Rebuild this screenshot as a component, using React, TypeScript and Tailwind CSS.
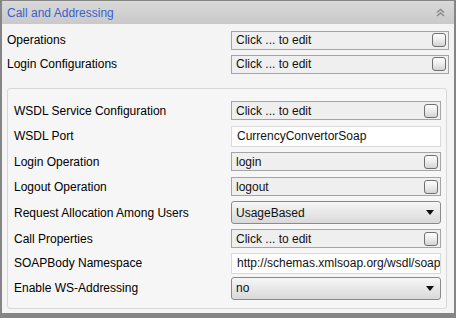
import React from "react";

const font = { fontFamily: '"Liberation Sans", Arial, sans-serif' };

function EditButton() {
  return (
    <span className="h-[14px] w-[14px] shrink-0 rounded-[3px] border border-[#6f6f6f] bg-linear-to-b from-[#fdfdfd] via-[#ececec] to-[#d4d4d4]" />
  );
}

function ClickBox({ text }: { text: string }) {
  return (
    <div className="flex h-[19px] w-full items-center justify-between border border-[#a4a4a4] bg-[#efefef] pl-[4px] pr-[2px] text-[#111]">
      <span className="leading-none">{text}</span>
      <EditButton />
    </div>
  );
}

function TextBox({ text }: { text: string }) {
  return (
    <input
      readOnly
      value={text}
      className="block h-[21px] w-full border border-[#dadada] bg-white pl-[5px] text-[12px] text-[#111] outline-none"
      style={font}
    />
  );
}

function SelectBox({ text }: { text: string }) {
  return (
    <div className="flex h-[23px] w-full items-center justify-between rounded-[3px] border border-[#8a8a8a] bg-linear-to-b from-[#f7f7f7] to-[#d9d9d9] pl-[4px] pr-[6px] text-[#111]">
      <span>{text}</span>
      <svg width="8" height="5" viewBox="0 0 8 5">
        <path d="M0 0 H8 L4 5 Z" fill="#111" />
      </svg>
    </div>
  );
}

type Row = {
  label: string;
  kind: "click" | "text" | "select";
  value: string;
  h: string;
};

const innerRows: Row[] = [
  { label: "WSDL Service Configuration", kind: "click", value: "Click ... to edit", h: "h-[25px]" },
  { label: "WSDL Port", kind: "text", value: "CurrencyConvertorSoap", h: "h-[26px]" },
  { label: "Login Operation", kind: "click", value: "login", h: "h-[25px]" },
  { label: "Logout Operation", kind: "click", value: "logout", h: "h-[25px]" },
  { label: "Request Allocation Among Users", kind: "select", value: "UsageBased", h: "h-[27px]" },
  { label: "Call Properties", kind: "click", value: "Click ... to edit", h: "h-[25px]" },
  { label: "SOAPBody Namespace", kind: "text", value: "http://schemas.xmlsoap.org/wsdl/soap/", h: "h-[24px]" },
  { label: "Enable WS-Addressing", kind: "select", value: "no", h: "h-[26px]" },
];

function Control({ row }: { row: Row }) {
  if (row.kind === "text") return <TextBox text={row.value} />;
  if (row.kind === "select") return <SelectBox text={row.value} />;
  return <ClickBox text={row.value} />;
}

export default function App() {
  return (
    <div
      className="h-[318px] w-[456px] bg-[#858585] px-[2px] pb-[5px] pt-[1px] text-[12px] text-black"
      style={font}
    >
      <div className="flex h-full flex-col bg-[#f4f4f4]">
        <div className="flex h-[23px] shrink-0 items-center justify-between bg-linear-to-b from-[#d9d9d9] to-[#c9c9c9] pl-[5px] pr-[9px]">
          <span className="text-[12px] text-[#3a5fcd]">Call and Addressing</span>
          <svg width="9" height="9" viewBox="0 0 9 9">
            <path d="M1 4.5 L4.5 1.5 L8 4.5 M1 8 L4.5 5 L8 8" fill="none" stroke="#8a8a8a" strokeWidth="1.6" />
          </svg>
        </div>

        <div className="flex flex-col pt-[4px]">
          {["Operations", "Login Configurations"].map((label) => (
            <div key={label} className="flex h-[24px] items-center">
              <div className="w-[229px] shrink-0 pl-[5px]">{label}</div>
              <div className="w-[218px]">
                <ClickBox text="Click ... to edit" />
              </div>
            </div>
          ))}
        </div>

        <div className="ml-[5px] mr-[7px] mt-[12px] rounded-[3px] border border-[#d8d8d8] bg-[#f6f6f6] pb-[7px] pl-[6px] pr-[5px] pt-[9px]">
          {innerRows.map((row) => (
            <div key={row.label} className={`flex items-center ${row.h}`}>
              <div className="w-[217px] shrink-0">{row.label}</div>
              <div className="w-[210px] shrink-0">
                <Control row={row} />
              </div>
            </div>
          ))}
        </div>
      </div>
    </div>
  );
}
